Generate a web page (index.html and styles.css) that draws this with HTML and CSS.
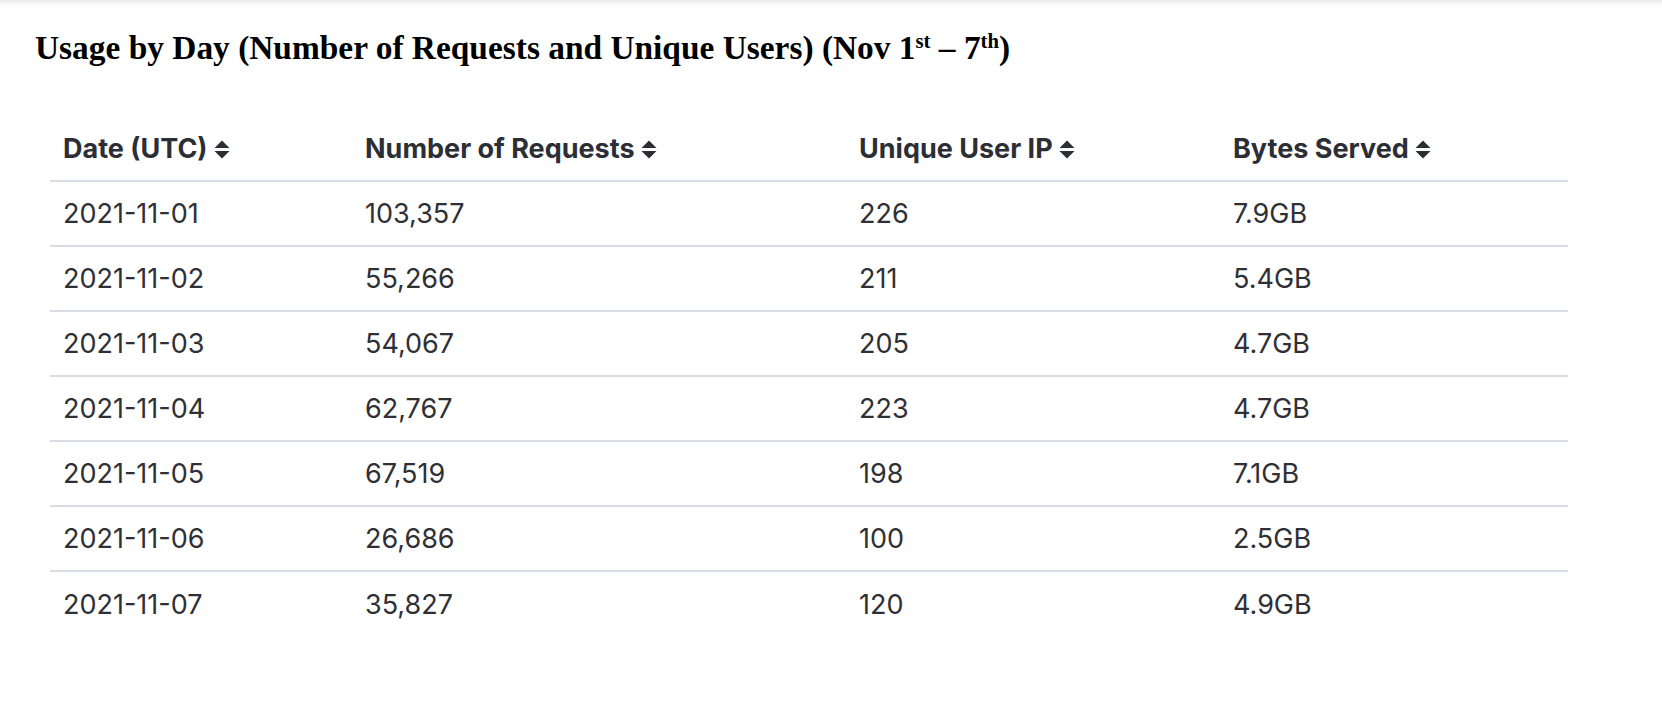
FILE: index.html
```html
<!DOCTYPE html>
<html lang="en">
<head>
<meta charset="utf-8">
<title>Usage by Day</title>
<link rel="stylesheet" href="styles.css">
</head>
<body>
<div class="topbar"></div>
<main class="page">
  <h2 class="title">Usage by Day (Number of Requests and Unique Users) (Nov 1<sup>st</sup> – 7<sup>th</sup>)</h2>
  <table class="usage">
    <thead>
      <tr>
        <th class="c1">Date (UTC)<svg class="sort" width="16" height="19" viewBox="0 0 16 19"><path d="M0.5 8h15L8 0.5z M0.5 11h15L8 18.5z"/></svg></th>
        <th class="c2">Number of Requests<svg class="sort" width="16" height="19" viewBox="0 0 16 19"><path d="M0.5 8h15L8 0.5z M0.5 11h15L8 18.5z"/></svg></th>
        <th class="c3">Unique User IP<svg class="sort" width="16" height="19" viewBox="0 0 16 19"><path d="M0.5 8h15L8 0.5z M0.5 11h15L8 18.5z"/></svg></th>
        <th class="c4">Bytes Served<svg class="sort" width="16" height="19" viewBox="0 0 16 19"><path d="M0.5 8h15L8 0.5z M0.5 11h15L8 18.5z"/></svg></th>
      </tr>
    </thead>
    <tbody>
      <tr><td>2021-11-01</td><td>103,357</td><td>226</td><td>7.9GB</td></tr>
      <tr><td>2021-11-02</td><td>55,266</td><td>211</td><td>5.4GB</td></tr>
      <tr><td>2021-11-03</td><td>54,067</td><td>205</td><td>4.7GB</td></tr>
      <tr><td>2021-11-04</td><td>62,767</td><td>223</td><td>4.7GB</td></tr>
      <tr><td>2021-11-05</td><td>67,519</td><td>198</td><td>7.1GB</td></tr>
      <tr><td>2021-11-06</td><td>26,686</td><td>100</td><td>2.5GB</td></tr>
      <tr><td>2021-11-07</td><td>35,827</td><td>120</td><td>4.9GB</td></tr>
    </tbody>
  </table>
</main>
</body>
</html>
```

FILE: styles.css
```css
* { box-sizing: border-box; }
html, body { margin: 0; padding: 0; background: #ffffff; }
.topbar {
  height: 6px;
  background: linear-gradient(#e9e9e9, #ffffff);
}
.page {
  padding: 0 0 0 35px;
}
.title {
  font-family: "Liberation Serif", "Times New Roman", serif;
  font-weight: 700;
  font-size: 33.4px;
  line-height: 38px;
  margin: 23px 0 0 0;
  color: #000;
}
.title sup {
  font-size: 0.62em;
  line-height: 0;
  vertical-align: 0.55em;
}
.usage {
  margin: 50px 0 0 15px;
  border-collapse: collapse;
  width: 1518px;
  font-family: Inter, "Noto Sans", sans-serif;
  font-size: 27px;
  color: #2f3036;
}
.usage th {
  text-align: left;
  font-weight: 700;
  color: #2c2e36;
  height: 64px;
  padding: 0 13px;
  border-bottom: 2px solid #d9dce5;
  white-space: nowrap;
}
.usage td {
  height: 65px;
  padding: 0 13px;
  border-bottom: 2px solid #d9dce5;
  font-weight: 400;
}
.usage tbody tr:last-child td { border-bottom: none; }
.c1 { width: 302px; }
.c2 { width: 494px; }
.c3 { width: 374px; }
.c4 { width: 348px; }
.sort {
  width: 16px;
  height: 19px;
  margin-left: 6px;
  vertical-align: -1px;
  fill: #2c2e36;
}
```
